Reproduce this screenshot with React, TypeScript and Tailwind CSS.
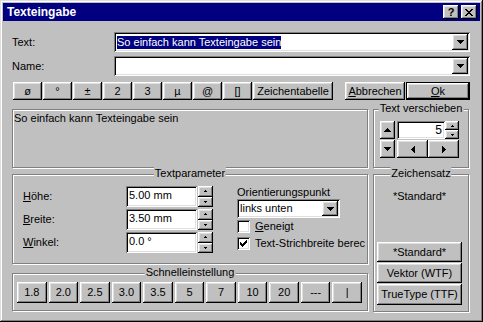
import React from "react";

const raised =
  "bg-[#c0c0c0] shadow-[inset_-1px_-1px_#000,inset_1px_1px_#fff,inset_-2px_-2px_#808080,inset_2px_2px_#dfdfdf]";
const sunken =
  "bg-white shadow-[inset_1px_1px_#808080,inset_-1px_-1px_#fff,inset_2px_2px_#000,inset_-2px_-2px_#dfdfdf]";
const etched = "border border-[#808080] shadow-[inset_1px_1px_#fff,1px_1px_#fff]";

const paths = {
  down: "M0 0h7v1h-7zM1 1h5v1h-5zM2 2h3v1h-3zM3 3h1v1h-1z",
  up: "M3 0h1v1h-1zM2 1h3v1h-3zM1 2h5v1h-5zM0 3h7v1h-7z",
  left: "M3 0h1v7h-1zM2 1h1v5h-1zM1 2h1v3h-1zM0 3h1v1h-1z",
  right: "M0 0h1v7h-1zM1 1h1v5h-1zM2 2h1v3h-1zM3 3h1v1h-1z",
  tinyUp: "M1 0h1v1h-1zM0 1h3v1h-3z",
  tinyDown: "M0 0h3v1h-3zM1 1h1v1h-1z",
  close:
    "M0 0h2v1h-2zM6 0h2v1h-2zM1 1h2v1h-2zM5 1h2v1h-2zM2 2h4v1h-4zM3 3h2v1h-2zM2 4h4v1h-4zM1 5h2v1h-2zM5 5h2v1h-2zM0 6h2v1h-2zM6 6h2v1h-2z",
  check:
    "M6 0h1v1h-1zM5 1h2v1h-2zM0 2h1v1h-1zM4 2h3v1h-3zM0 3h2v1h-2zM3 3h3v1h-3zM0 4h5v1h-5zM1 5h3v1h-3zM2 6h1v1h-1z",
};

function Glyph({ d, w, h }: { d: string; w: number; h: number }) {
  return (
    <svg width={w} height={h} viewBox={`0 0 ${w} ${h}`} shapeRendering="crispEdges">
      <path d={d} fill="#000" />
    </svg>
  );
}

function Combo({ className = "", children }: { className?: string; children?: React.ReactNode }) {
  return (
    <div className={`${sunken} flex items-center p-[2px] ${className}`}>
      <div className="flex-1 overflow-hidden whitespace-nowrap pl-[1px]">{children}</div>
      <div className={`${raised} flex h-full w-[16px] items-center justify-center`}>
        <Glyph d={paths.down} w={7} h={4} />
      </div>
    </div>
  );
}

function Btn({ className = "", children }: { className?: string; children?: React.ReactNode }) {
  return (
    <div className={`${raised} flex items-center justify-center whitespace-nowrap ${className}`}>
      {children}
    </div>
  );
}

function Group({ label, className = "", children }: { label: string; className?: string; children?: React.ReactNode }) {
  return (
    <div className={`${etched} relative ${className}`}>
      <span className="absolute -top-[8px] left-1/2 -translate-x-1/2 whitespace-nowrap bg-[#c0c0c0] px-[1px]">
        {label}
      </span>
      {children}
    </div>
  );
}

function Spin({ className = "" }: { className?: string }) {
  return (
    <div className={`flex flex-col ${className}`}>
      <Btn className="flex-1">
        <Glyph d={paths.tinyUp} w={3} h={2} />
      </Btn>
      <Btn className="flex-1">
        <Glyph d={paths.tinyDown} w={3} h={2} />
      </Btn>
    </div>
  );
}

function Field({ label, u, rest, value }: { label: string; u: string; rest: string; value: string }) {
  void label;
  return (
    <div className="flex h-[21px] items-center">
      <span className="w-[103px]">
        <span className="underline">{u}</span>
        {rest}
      </span>
      <div className={`${sunken} flex h-full w-[71px] items-start pl-[3px] pt-[3px]`}>{value}</div>
      <Spin className="ml-[1px] h-full w-[15px]" />
    </div>
  );
}

function Check({ checked, children }: { checked?: boolean; children: React.ReactNode }) {
  return (
    <div className="flex h-[13px] items-center">
      <div className={`${sunken} flex h-[13px] w-[13px] items-center justify-center`}>
        {checked && <Glyph d={paths.check} w={7} h={7} />}
      </div>
      <span className="ml-[5px] whitespace-nowrap">{children}</span>
    </div>
  );
}

export default function App() {
  const symbols = ["ø", "°", "±", "2", "3", "µ", "@", "[]"];
  const quick = ["1.8", "2.0", "2.5", "3.0", "3.5", "5", "7", "10", "20", "---", "|"];

  return (
    <div className="flex h-[322px] w-[483px] flex-col bg-[#c0c0c0] p-[3px] font-['Liberation_Sans',Arial,sans-serif] text-[11px] leading-[13px] text-black shadow-[inset_-1px_-1px_#000,inset_1px_1px_#dfdfdf,inset_-2px_-2px_#808080,inset_2px_2px_#fff]">
      {/* title bar */}
      <div className="flex h-[18px] items-center bg-[#000080] pl-[4px] pr-[3px]">
        <span className="flex-1 text-[12px] font-bold text-white">Texteingabe</span>
        <Btn className="h-[14px] w-[16px] text-[11px] font-bold leading-[11px]">?</Btn>
        <Btn className="ml-[2px] h-[14px] w-[16px]">
          <Glyph d={paths.close} w={8} h={7} />
        </Btn>
      </div>

      <div className="flex flex-1 flex-col pl-[9px] pr-[10px] pt-[11px]">
        {/* Text */}
        <div className="flex h-[20px] items-center">
          <span className="w-[102px]">Text:</span>
          <Combo className="h-full flex-1">
            <span className="bg-[#000080] py-[1px] text-white">So einfach kann Texteingabe sein</span>
          </Combo>
        </div>

        {/* Name */}
        <div className="mt-[4px] flex h-[20px] items-center">
          <span className="w-[102px]">Name:</span>
          <Combo className="h-full flex-1" />
        </div>

        {/* symbol buttons */}
        <div className="mt-[6px] flex h-[18px] pl-[1px]">
          <div className="flex gap-[1px]">
            {symbols.map((s) => (
              <Btn key={s} className="w-[29px]">
                {s}
              </Btn>
            ))}
            <Btn className="w-[80px]">Zeichentabelle</Btn>
          </div>
          <div className="flex-1" />
          <Btn className="w-[60px]">
            <span className="underline">A</span>bbrechen
          </Btn>
          <div className="ml-[1px] flex w-[64px] border border-black">
            <Btn className="flex-1">
              <span className="underline">O</span>k
            </Btn>
          </div>
        </div>

        {/* preview + Text verschieben */}
        <div className="mt-[9px] flex h-[59px]">
          <div className={`${etched} w-[356px] px-[1px] pt-[2px]`}>So einfach kann Texteingabe sein</div>
          <Group label="Text verschieben" className="ml-[5px] mr-[1px] flex-1 pl-[6px] pt-[11px]">
            <div className="flex h-[18px]">
              <Btn className="w-[15px]">
                <Glyph d={paths.up} w={7} h={4} />
              </Btn>
              <div className={`${sunken} ml-[2px] flex w-[48px] items-center justify-end pr-[3px] text-[12px]`}>5</div>
              <Spin className="w-[14px]" />
            </div>
            <div className="mt-[1px] flex h-[18px]">
              <Btn className="w-[15px]">
                <Glyph d={paths.down} w={7} h={4} />
              </Btn>
              <Btn className="ml-[2px] w-[31px]">
                <Glyph d={paths.left} w={4} h={7} />
              </Btn>
              <Btn className="w-[31px]">
                <Glyph d={paths.right} w={4} h={7} />
              </Btn>
            </div>
          </Group>
        </div>

        {/* lower area */}
        <div className="mt-[6px] flex h-[138px]">
          <div className="flex w-[357px] flex-col">
            <Group label="Textparameter" className="flex h-[90px] w-[356px] pl-[10px] pt-[11px]">
              <div className="flex flex-col gap-[2px]">
                <Field label="Höhe" u="H" rest="öhe:" value="5.00 mm" />
                <Field label="Breite" u="B" rest="reite:" value="3.50 mm" />
                <Field label="Winkel" u="W" rest="inkel:" value="0.0 °" />
              </div>
              <div className="ml-[24px] flex flex-col">
                <span>Orientierungspunkt</span>
                <Combo className="h-[19px] w-[103px]">links unten</Combo>
                <div className="mt-[2px]">
                  <Check>
                    <span className="underline">G</span>eneigt
                  </Check>
                </div>
                <div className="mt-[4px]">
                  <Check checked>Text-Strichbreite berec</Check>
                </div>
              </div>
            </Group>
            <Group label="Schnelleinstellung" className="mt-[9px] flex h-[38px] w-[356px] gap-[2px] pl-[4px] pr-[5px] pt-[8px]">
              {quick.map((q) => (
                <Btn key={q} className="h-[21px] flex-1">
                  {q}
                </Btn>
              ))}
            </Group>
          </div>
          <Group label="Zeichensatz" className="ml-[4px] mr-[1px] flex flex-1 flex-col pl-[3px] pt-[15px]">
            <div className="w-[85px] text-center">*Standard*</div>
            <div className="flex-1" />
            <div className="mb-[6px] flex w-[85px] flex-col gap-[1px]">
              <Btn className="h-[20px]">*Standard*</Btn>
              <Btn className="h-[20px]">Vektor (WTF)</Btn>
              <Btn className="h-[21px]">TrueType (TTF)</Btn>
            </div>
          </Group>
        </div>
      </div>
    </div>
  );
}
